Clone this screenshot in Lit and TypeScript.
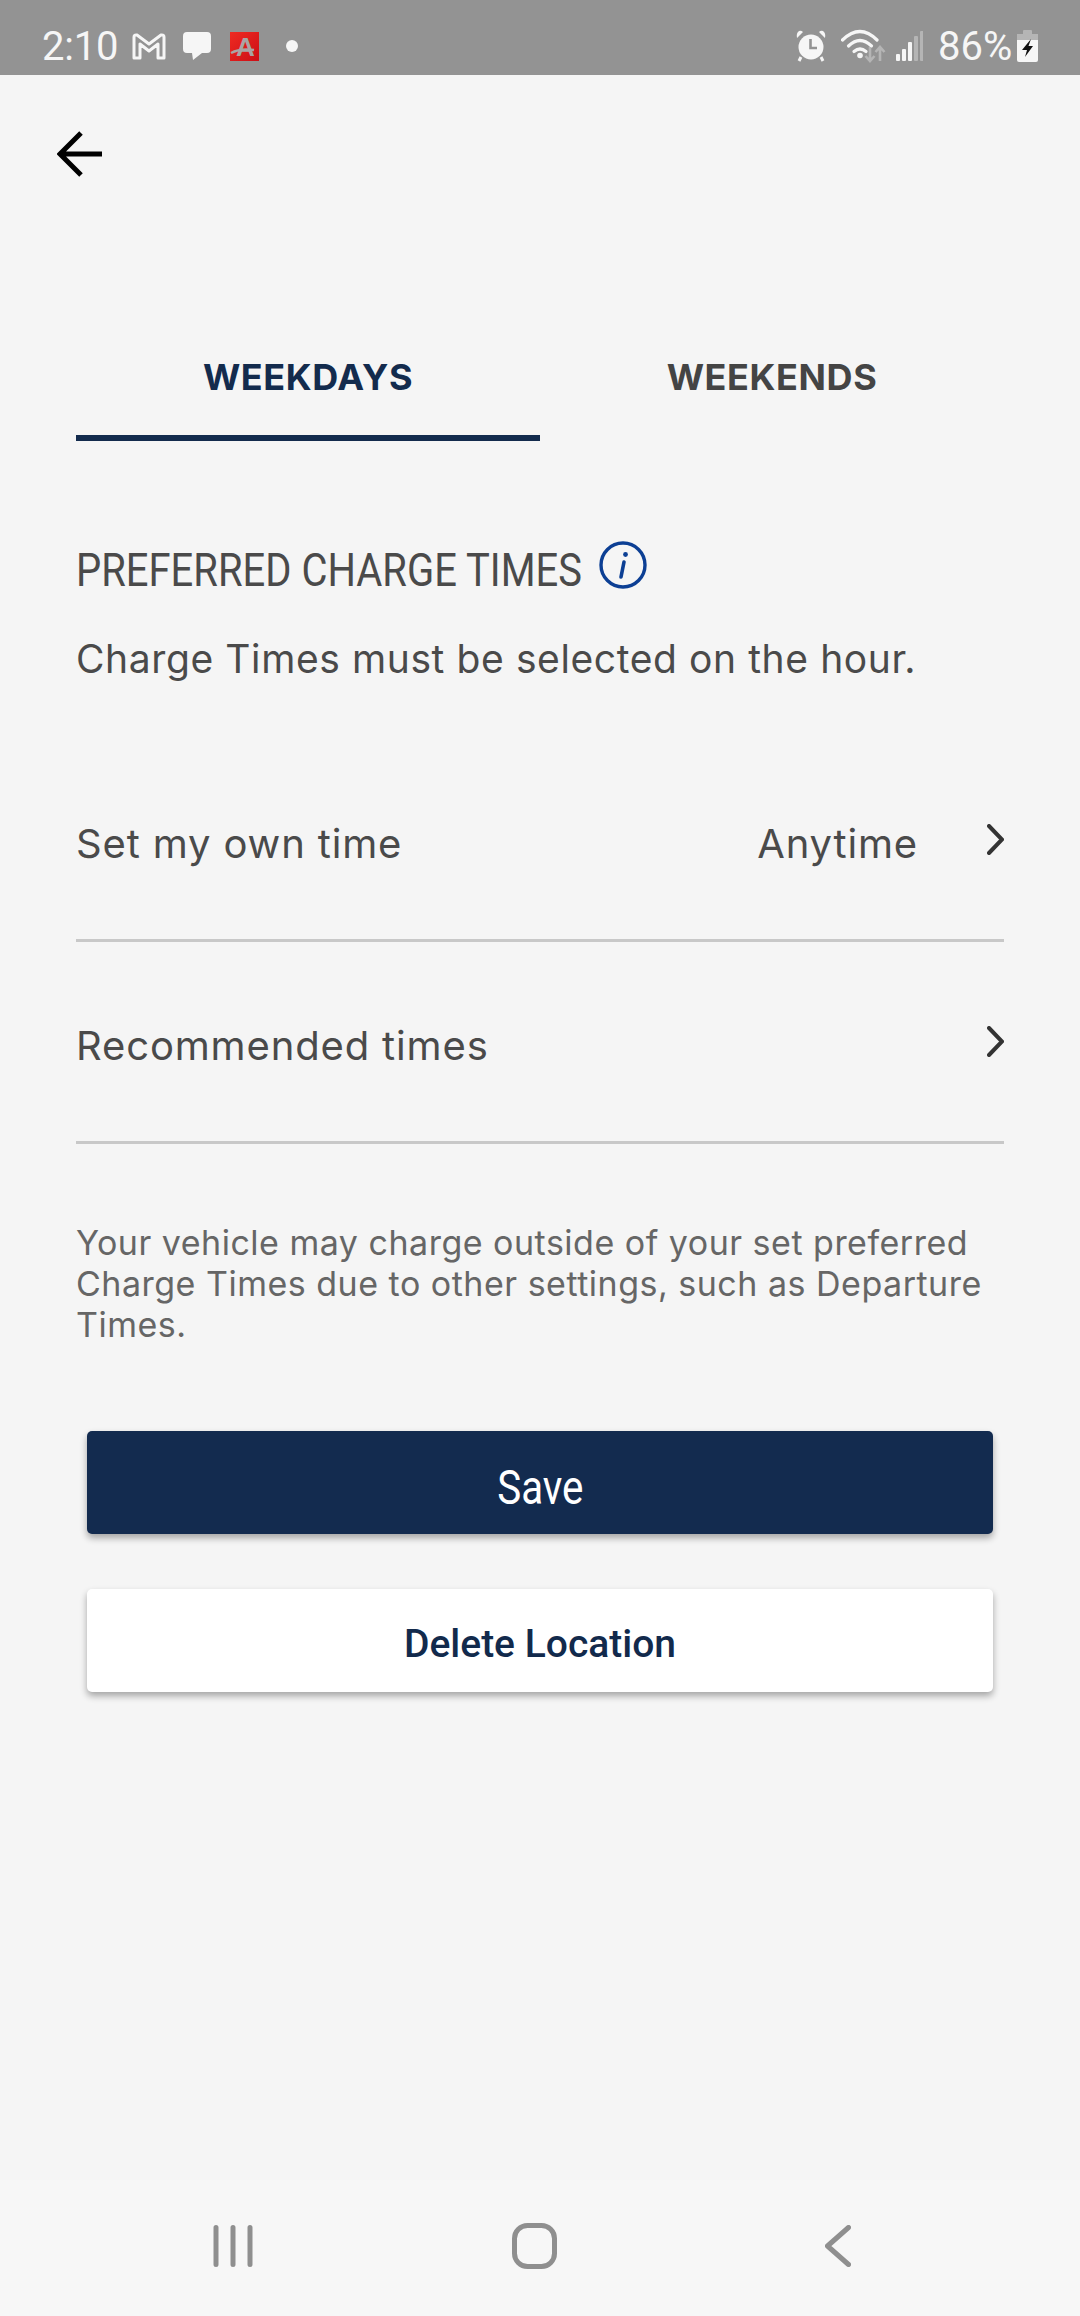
import { LitElement, html, css } from "lit";
import { customElement } from "lit/decorators.js";

const chevron = html`<svg class="chev" viewBox="0 0 17 31" width="17" height="31"><path d="M2 2 L15 15.5 L2 29" fill="none" stroke="#333" stroke-width="4" stroke-linecap="round" stroke-linejoin="miter"/></svg>`;

@customElement("app-root")
export class AppRoot extends LitElement {
  static styles = css`
    :host { display: block; width: 1080px; height: 2316px; background: #f5f5f5; font-family: Inter, "Liberation Sans", sans-serif; overflow: hidden; }
    .page { display: flex; flex-direction: column; height: 2316px; }
    .status { height: 75px; flex: none; background: #939393; display: flex; align-items: center; color: #f6f6f6; font-family: Roboto, sans-serif; font-size: 40px; box-sizing: border-box; padding: 17px 42px 0 42px; }
    .status svg { display: block; flex: none; }
    .time { width: 75px; line-height: 57px; letter-spacing: -0.2px; margin-right: 15px; padding-top: 1px; }
    .i-m { margin-right: 16px; }
    .i-chat { margin-right: 18px; }
    .i-a { margin-right: 27px; }
    .spacer { flex: 1; }
    .i-alarm { margin-right: 15px; }
    .i-wifi { margin-right: 10px; }
    .i-sig { margin-right: 15px; }
    .pct { width: 76px; line-height: 57px; margin-right: 3px; white-space: nowrap; padding-top: 1px; }
    .back-row { flex: none; height: 113px; padding: 56px 0 0 57px; box-sizing: border-box; }
    .back-row svg { display: block; }
    .main { flex: 1; padding: 0 76px; display: flex; flex-direction: column; }
    .tabs { display: grid; grid-template-columns: 1fr 1fr; margin-top: 117px; flex: none; }
    .tab { height: 136px; box-sizing: border-box; display: flex; align-items: center; justify-content: center; padding-top: 14px; font-weight: 700; font-size: 36px; letter-spacing: .6px; color: #444; border-bottom: 6px solid transparent; }
    .tab.on { color: #132b4d; border-bottom-color: #132b4d; }
    .head { display: flex; align-items: center; margin-top: 100px; height: 48px; }
    .head h2 { margin: 0; width: 506px; flex: none; font: 400 47px/48px Roboto, sans-serif; color: #4a4a4a; white-space: nowrap; position: relative; top: 5px; transform: scaleX(.85); transform-origin: 0 50%; }
    .head svg { margin-left: 17px; display: block; flex: none; }
    .sub { margin: 47px 0 0; font-size: 39px; letter-spacing: .6px; line-height: 46px; color: #4a4a4a; white-space: nowrap; }
    .rows { margin-top: 58px; }
    .row { height: 202px; box-sizing: border-box; border-bottom: 3px solid #c8c8c8; display: flex; align-items: center; font-size: 40px; letter-spacing: .85px; color: #4a4a4a; }
    .row .lab { flex: 1; position: relative; top: 4px; }
    .row .val { position: relative; top: 4px; }
    .chev { margin-left: 69px; }
    .row.nov .chev { margin-left: 0; }
    .note { margin: 78px 0 0; font-size: 34px; letter-spacing: .5px; line-height: 41px; color: #666; }
    .btns { display: flex; flex-direction: column; gap: 55px; margin: 86px 11px 0; }
    .btn { height: 103px; border-radius: 5px; display: flex; align-items: center; justify-content: center; box-shadow: 0 4px 7px rgba(0,0,0,.33); }
    .save { background: #132b4f; color: #fff; font: 400 48px/1 Roboto, sans-serif; padding-top: 11px; box-sizing: border-box; }
    .save span { display: block; transform: scaleX(.84); }
    .del { background: #fff; color: #122a4c; font: 500 39px/1 Roboto, sans-serif; padding-top: 7px; box-sizing: border-box; }
    .nav { flex: none; height: 136px; background: #f7f7f7; display: grid; grid-template-columns: 473px 1fr 255px; }
    .nav svg { display: block; margin-top: 45px; }
    .nav .home { margin-top: 43px; }
    .n1 { padding-left: 213px; }
    .n2 { padding-left: 39px; }
  `;

  render() {
    return html`<div class="page">
      <div class="status">
        <span class="time">2:10</span>
        <svg class="i-m" width="34" height="27" viewBox="0 0 34 27"><path d="M2 25 V4 Q2 1.5 5 2 L17 11 L29 2 Q32 1.5 32 4 V25 H26 V11 L17 18 L8 11 V25 Z" fill="none" stroke="#f6f6f6" stroke-width="3" stroke-linejoin="round"/></svg>
        <svg class="i-chat" width="30" height="30" viewBox="0 0 30 30"><path d="M5 1 H25 Q29 1 29 5 V18 Q29 22 25 22 H20 L11 29 L10 22 H5 Q1 22 1 18 V5 Q1 1 5 1 Z" fill="#f6f6f6"/></svg>
        <svg class="i-a" width="29" height="29" viewBox="0 0 29 29"><defs><linearGradient id="ra" x1="0" y1="0" x2="1" y2="1"><stop offset="0" stop-color="#ef2a22"/><stop offset="1" stop-color="#cc0f16"/></linearGradient></defs><rect width="29" height="29" fill="url(#ra)"/><path d="M1 21 Q10 16 24 18" fill="none" stroke="#a9a4a4" stroke-width="2.4"/><text x="15.5" y="24" text-anchor="middle" font-family="Liberation Sans" font-weight="700" font-size="26" fill="#a9a4a4">A</text></svg>
        <svg width="12" height="12" viewBox="0 0 12 12"><circle cx="6" cy="6" r="6" fill="#f6f6f6"/></svg>
        <span class="spacer"></span>
        <svg class="i-alarm" width="30" height="32" viewBox="0 0 30 32"><path d="M1 8 L7 2 Q5 0 3 1 Q0 3 1 8 Z M29 8 L23 2 Q25 0 27 1 Q30 3 29 8 Z" fill="#f6f6f6"/><circle cx="15" cy="17" r="12.5" fill="#f6f6f6"/><path d="M5 27 L3 31 M25 27 L27 31" stroke="#f6f6f6" stroke-width="3"/><path d="M14.5 9 V18 H21" fill="none" stroke="#939393" stroke-width="2.6"/></svg>
        <svg class="i-wifi" width="45" height="34" viewBox="0 0 45 34"><g fill="none" stroke="#f6f6f6" stroke-width="3.2" stroke-linecap="round"><path d="M1.5 11 Q19 -6 36 11"/><path d="M7.5 17 Q19 6 30.5 17"/><path d="M13 22.5 Q19 17.5 25 22.5"/></g><circle cx="19" cy="26.5" r="2.8" fill="#f6f6f6"/><g fill="none" stroke="#b5b5b5" stroke-width="2.6"><path d="M29 18 V31 M24.5 27 L29 32 L33.5 27"/><path d="M39 32 V19 M34.5 23 L39 18 L43.5 23"/></g></svg>
        <svg class="i-sig" width="27" height="30" viewBox="0 0 27 30"><rect x="0" y="23" width="4" height="7" rx="1" fill="#f6f6f6"/><rect x="6" y="18" width="4" height="12" rx="1" fill="#f6f6f6"/><rect x="12" y="11" width="4" height="19" rx="1" fill="#f6f6f6"/><rect x="18" y="5" width="4" height="25" rx="1" fill="#b5b5b5"/><rect x="24" y="0" width="3.5" height="30" rx="1" fill="#b5b5b5"/></svg>
        <span class="pct">86%</span>
        <svg width="21" height="32" viewBox="0 0 21 32"><path d="M6 1 Q6 0 7 0 H14 Q15 0 15 1 V4 H6 Z" fill="#b5b5b5"/><rect x="0" y="4" width="21" height="6" fill="#b5b5b5"/><path d="M0 10 H21 V30 Q21 32 19 32 H2 Q0 32 0 30 Z" fill="#f6f6f6"/><path d="M14 9 L5 20 H10 L8 27 L16 16 H11.5 Z" fill="#111"/></svg>
      </div>
      <div class="back-row">
        <svg width="46" height="46" viewBox="0 0 46 46"><path d="M45 23 H4 M24 2 L3 23 L24 44" fill="none" stroke="#000" stroke-width="5"/></svg>
      </div>
      <div class="main">
        <div class="tabs">
          <div class="tab on">WEEKDAYS</div>
          <div class="tab">WEEKENDS</div>
        </div>
        <div class="head">
          <h2>PREFERRED CHARGE TIMES</h2>
          <svg width="48" height="48" viewBox="0 0 48 48"><circle cx="24" cy="24" r="22" fill="none" stroke="#0c3f94" stroke-width="3.4"/><path d="M25 21 L22 36" fill="none" stroke="#0c3f94" stroke-width="3.6" stroke-linecap="round"/><circle cx="26.5" cy="13.5" r="2.4" fill="#0c3f94"/></svg>
        </div>
        <p class="sub">Charge Times must be selected on the hour.</p>
        <div class="rows">
          <div class="row"><span class="lab">Set my own time</span><span class="val">Anytime</span>${chevron}</div>
          <div class="row nov"><span class="lab">Recommended times</span>${chevron}</div>
        </div>
        <p class="note">Your vehicle may charge outside of your set preferred Charge Times due to other settings, such as Departure Times.</p>
        <div class="btns">
          <div class="btn save"><span>Save</span></div>
          <div class="btn del">Delete Location</div>
        </div>
      </div>
      <div class="nav">
        <div class="n1"><svg width="40" height="42" viewBox="0 0 40 42"><path d="M3 2.5 V39.5 M20 2.5 V39.5 M37 2.5 V39.5" stroke="#8f8f8f" stroke-width="5" stroke-linecap="round"/></svg></div>
        <div class="n2"><svg class="home" width="45" height="46" viewBox="0 0 45 46"><rect x="2.5" y="2.5" width="40" height="41" rx="13" fill="none" stroke="#8f8f8f" stroke-width="5"/></svg></div>
        <div><svg width="26" height="42" viewBox="0 0 26 42"><path d="M23.5 2.5 L2.5 21 L23.5 39.5" fill="none" stroke="#8f8f8f" stroke-width="5" stroke-linecap="round" stroke-linejoin="round"/></svg></div>
      </div>
    </div>`;
  }
}
